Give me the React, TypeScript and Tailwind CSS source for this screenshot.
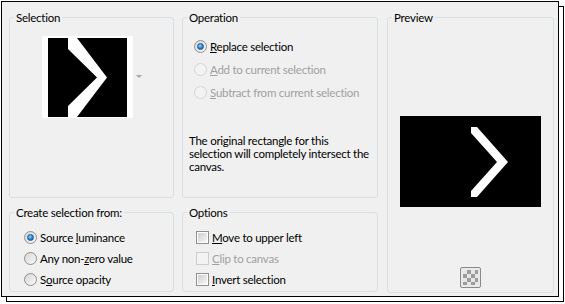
import type { ReactNode } from 'react';

function Group({ title, className, children }: { title: string; className: string; children?: ReactNode }) {
  return (
    <fieldset className={`border border-[#d5dfe5] rounded-[3px] ${className}`}>
      <legend className="ml-[4px] px-[2px] leading-[15px]">{title}</legend>
      {children}
    </fieldset>
  );
}

function Radio({ checked = false, disabled = false }: { checked?: boolean; disabled?: boolean }) {
  if (disabled) {
    return <span className="w-[13px] h-[13px] shrink-0 rounded-full border border-[#d4d4d4] bg-[#f3f3f3]" />;
  }
  return (
    <span className="w-[13px] h-[13px] shrink-0 rounded-full border border-[#8e8f8f] bg-gradient-to-br from-[#d6d6d6] to-[#fafafa] flex items-center justify-center">
      {checked && (
        <span className="w-[7px] h-[7px] rounded-full border border-[#1d5a96] bg-[radial-gradient(circle_at_40%_35%,#9ad6fb_0%,#3a8fd6_45%,#0d4b8c_100%)]" />
      )}
    </span>
  );
}

function Check({ disabled = false }: { disabled?: boolean }) {
  if (disabled) {
    return <span className="w-[13px] h-[13px] shrink-0 border border-[#cdcdcd] bg-[#f3f3f3]" />;
  }
  return (
    <span className="w-[13px] h-[13px] shrink-0 border border-[#8e8f8f] bg-white p-[1px]">
      <span className="block w-full h-full bg-gradient-to-br from-[#cfcfcf] to-[#f7f7f7]" />
    </span>
  );
}

function Row({ control, children, disabled = false }: { control: ReactNode; children: ReactNode; disabled?: boolean }) {
  return (
    <div className={`flex items-center gap-[3px] h-[15px] leading-[15px] whitespace-nowrap ${disabled ? 'text-[#a0a0a0]' : ''}`}>
      {control}
      <span>{children}</span>
    </div>
  );
}

export default function App() {
  return (
    <div className="w-[565px] h-[304px] bg-white pt-px pl-px font-['Lato',sans-serif] text-[11.5px] tracking-[-0.25px] text-black">
      <div className="w-[558px] h-[296px] border border-black bg-[#f0f0f0] shadow-[5px_5px_0_-1px_#fff,5px_5px_0_0_#000] flex gap-[8px] pl-[7px] pt-[8px]">
        {/* left column */}
        <div className="w-[165px] flex flex-col gap-[7px]">
          <Group title="Selection" className="h-[188px]">
            <div className="flex items-center ml-[32px] mt-[11px]">
              <div className="bg-white pl-[6px] pr-[6px] pt-[2px] pb-[1px]">
                <svg width="79" height="79" viewBox="0 0 79 79" className="block">
                  <rect width="79" height="79" fill="#000" />
                  <polygon points="20,0 29,0 59,39.5 29,79 20,79 20,68 49,39.5 20,11" fill="#fff" />
                </svg>
              </div>
              <svg width="6" height="4" viewBox="0 0 6 4" className="ml-[3px]">
                <polygon points="0,0 6,0 3,3" fill="#a8a8a8" />
              </svg>
            </div>
          </Group>
          <Group title="Create selection from:" className="h-[87px]">
            <div className="flex flex-col gap-[6px] pl-[14px] mt-[10px]">
              <Row control={<Radio checked />}>
                Source <span className="underline">l</span>uminance
              </Row>
              <Row control={<Radio />}>
                Any non-<span className="underline">z</span>ero value
              </Row>
              <Row control={<Radio />}>
                S<span className="underline">o</span>urce opacity
              </Row>
            </div>
          </Group>
        </div>

        {/* middle column */}
        <div className="w-[196px] flex flex-col gap-[7px]">
          <Group title="Operation" className="h-[188px]">
            <div className="flex flex-col gap-[8px] pl-[11px] mt-[14px]">
              <Row control={<Radio checked />}>
                <span className="underline">R</span>eplace selection
              </Row>
              <Row control={<Radio disabled />} disabled>
                <span className="underline">A</span>dd to current selection
              </Row>
              <Row control={<Radio disabled />} disabled>
                <span className="underline">S</span>ubtract from current selection
              </Row>
            </div>
            <p className="pl-[6px] mt-[34px] leading-[13px] whitespace-nowrap">
              The original rectangle for this
              <br />
              selection will completely intersect the
              <br />
              canvas.
            </p>
          </Group>
          <Group title="Options" className="h-[87px]">
            <div className="flex flex-col gap-[6px] pl-[13px] mt-[10px]">
              <Row control={<Check />}>
                <span className="underline">M</span>ove to upper left
              </Row>
              <Row control={<Check disabled />} disabled>
                <span className="underline">C</span>lip to canvas
              </Row>
              <Row control={<Check />}>
                <span className="underline">I</span>nvert selection
              </Row>
            </div>
          </Group>
        </div>

        {/* right column */}
        <div className="w-[167px] ml-[1px]">
          <Group title="Preview" className="h-[283px]">
            <svg width="141" height="91" viewBox="0 0 141 91" className="block mx-auto mt-[91px]">
              <rect width="141" height="91" fill="#000" />
              <polygon points="71,11 77,11 108,46 77,81 71,81 71,75 97,46 71,17" fill="#fff" />
            </svg>
            <div className="mx-auto mt-[60px] w-[21px] h-[21px] rounded-[2px] border border-[#8a8a8a] bg-[#e9e9e9] p-[2px]">
              <div className="w-full h-full bg-[repeating-conic-gradient(#9c9c9c_0_25%,#e6e6e6_0_50%)] bg-[length:8px_8px]" />
            </div>
          </Group>
        </div>
      </div>
    </div>
  );
}
